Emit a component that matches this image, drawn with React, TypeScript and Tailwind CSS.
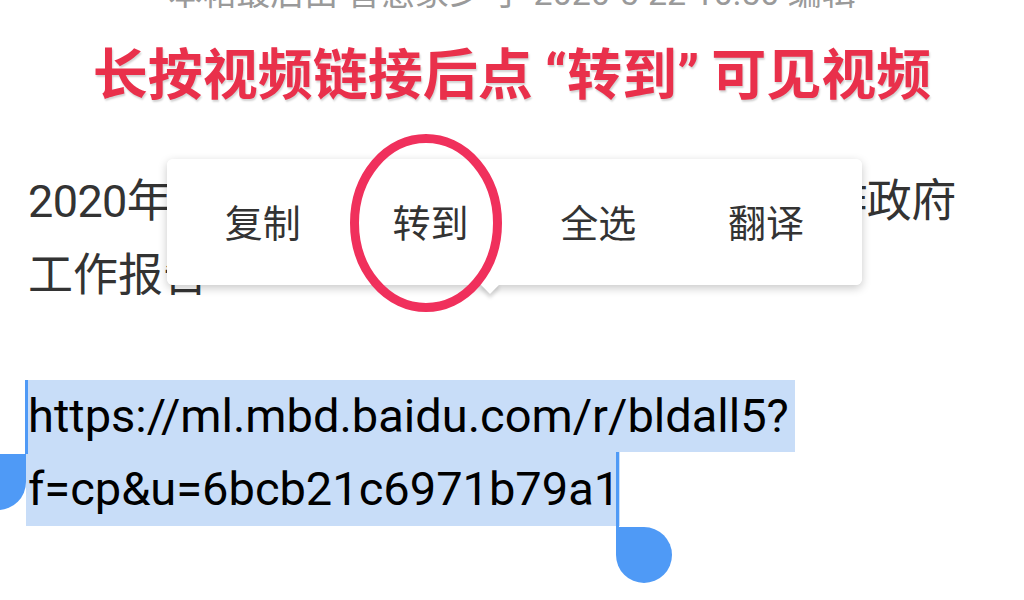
const CJK = "font-['Roboto','Noto_Sans_CJK_SC',sans-serif]";

const menuItems = ["复制", "转到", "全选", "翻译"];

export default function App() {
  return (
    <div className="relative h-[600px] w-[1024px] overflow-hidden bg-white">
      {/* edit note, scrolled mostly out of view */}
      <div
        className={`${CJK} mt-[-27px] h-[40px] whitespace-nowrap text-center text-[34px] leading-[40px] text-[#9a9a9a]`}
      >
        本帖最后由 智慧家乡 于 2020-5-22 10:50 编辑
      </div>

      <h1 className="mt-[22px] whitespace-nowrap text-center font-['Noto_Sans_CJK_SC',sans-serif] text-[55px] font-bold leading-[70px] text-[#e9304b] [text-shadow:1px_2px_2px_rgba(0,0,0,0.18)]">
        长按视频链接后点
        <span className="pl-[12px] font-['Roboto',sans-serif]">“</span>
        转到
        <span className="pr-[12px] font-['Roboto',sans-serif]">”</span>
        可见视频
      </h1>

      <div className={`${CJK} mt-[55px] pl-[28px] text-[45px] leading-[74px] text-[#333]`}>
        <div className="whitespace-nowrap tracking-[-0.6px]">2020年5月22日上午，国务院总理李克强作政府</div>
        <div className="whitespace-nowrap">工作报告</div>
      </div>

      <div className="relative mt-[67px] pl-[26px] font-['Roboto',sans-serif] text-[47px] text-black">
        <div className="w-fit whitespace-nowrap bg-[#c8ddf8] pl-[2px] pr-[6px] leading-[72px]">
          https://ml.mbd.baidu.com/r/bldall5?
        </div>
        <div className="w-fit whitespace-nowrap bg-[#c8ddf8] pl-[2px] leading-[74px]">
          f=cp&amp;u=6bcb21c6971b79a1
        </div>

        {/* selection start handle */}
        <div className="absolute left-[25px] top-0 h-[74px] w-[3px] bg-[#4f9af6]" />
        <div className="absolute left-[-30px] top-[74px] h-[56px] w-[56px] rounded-full rounded-tr-none bg-[#4f9af6]" />

        {/* selection end handle */}
        <div className="absolute left-[616px] top-[72px] h-[76px] w-[3px] bg-[#4f9af6]" />
        <div className="absolute left-[616px] top-[147px] h-[56px] w-[56px] rounded-full rounded-tl-none bg-[#4f9af6]" />
      </div>

      {/* text selection menu */}
      <div className="absolute left-[167px] top-[159px] h-[126px] w-[695px] rounded-md bg-white shadow-[0_3px_10px_rgba(0,0,0,0.22)]">
        <div className="absolute left-[316px] top-[118px] h-[14px] w-[14px] rotate-45 bg-white shadow-[3px_3px_4px_rgba(0,0,0,0.15)]" />
        <div className="relative flex h-full items-center rounded-md bg-white px-[12px] pt-[4px]">
          {menuItems.map((m) => (
            <div
              key={m}
              className={`${CJK} flex-1 text-center text-[38px] leading-none text-[#333]`}
            >
              {m}
            </div>
          ))}
        </div>
      </div>

      {/* red annotation circle */}
      <svg className="absolute left-0 top-0" width="1024" height="600">
        <ellipse cx="426" cy="223" rx="71.5" ry="84.5" fill="none" stroke="#f0305c" strokeWidth="9" />
      </svg>
    </div>
  );
}
